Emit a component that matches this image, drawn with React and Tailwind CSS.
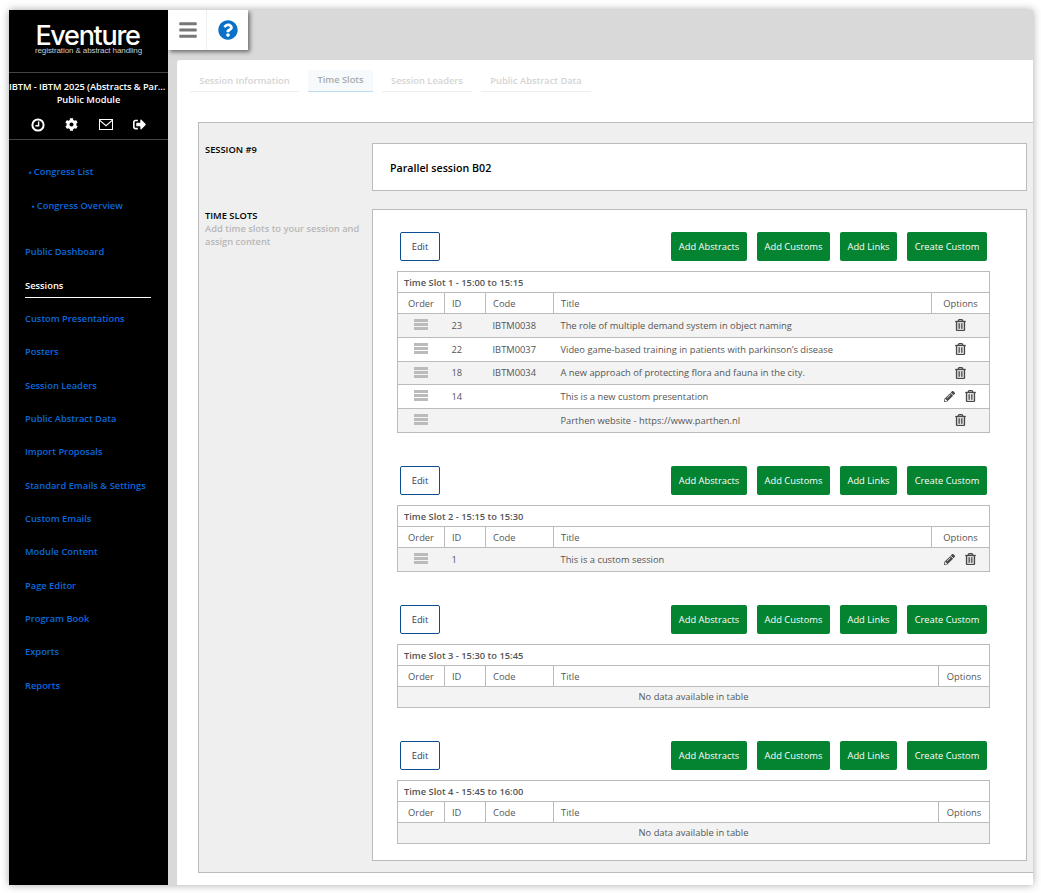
import React from "react";
import { FaBars, FaQuestionCircle, FaCog, FaSignOutAlt, FaRegTrashAlt, FaPencilAlt } from "react-icons/fa";

const nav = [
  ["Public Dashboard", "h-[34px]"],
  ["Sessions", "h-[33px]", true],
  ["Custom Presentations", "h-[33px]"],
  ["Posters", "h-[34px]"],
  ["Session Leaders", "h-[33px]"],
  ["Public Abstract Data", "h-[33px]"],
  ["Import Proposals", "h-[34px]"],
  ["Standard Emails & Settings", "h-[33px]"],
  ["Custom Emails", "h-[33px]"],
  ["Module Content", "h-[34px]"],
  ["Page Editor", "h-[33px]"],
  ["Program Book", "h-[33px]"],
  ["Exports", "h-[34px]"],
  ["Reports", "h-[33px]"],
];

const tabs = [
  ["Session Information", "w-[109px]"],
  ["Time Slots", "w-[65px]", true],
  ["Session Leaders", "w-[90px]"],
  ["Public Abstract Data", "w-[110px]"],
];

function Handle() {
  return (
    <div className="mx-auto mb-[2px] flex w-[14px] flex-col gap-[1px]">
      <div className="h-[3px] bg-[#bbbbbb]" />
      <div className="h-[3px] bg-[#bbbbbb]" />
      <div className="h-[3px] bg-[#bbbbbb]" />
    </div>
  );
}

function Options({ edit }) {
  return (
    <div className="mb-[1px] flex items-center justify-center gap-[10px] text-[#4a4a4a]">
      {edit && <FaPencilAlt className="h-[11px] w-[11px]" />}
      <FaRegTrashAlt className="h-[12px] w-[11px]" stroke="currentColor" strokeWidth={12} />
    </div>
  );
}

function Slot({ caption, rows, optionsWide, className }) {
  const td = "px-[7px] text-[9.33px] text-[#555555]";
  const th = "border-x border-[#bbbbbb] px-[7px] pt-[1px] text-[9.33px] font-normal text-[#555555]";
  return (
    <div className={className}>
      <div className="flex h-[29px] items-stretch justify-between pl-[27px] pr-[39px]">
        <button className="w-[40px] rounded-[2px] border border-[#0b4f91] bg-white text-[9.33px] text-[#333a5a]">Edit</button>
        <div className="flex gap-[10px]">
          {[["Add Abstracts", "w-[76px]"], ["Add Customs", "w-[73px]"], ["Add Links", "w-[57px]"], ["Create Custom", "w-[80px]"]].map(([t, w]) => (
            <button key={t} className={`${w} rounded-[2px] bg-[#048330] text-[9.33px] font-medium text-white`}>{t}</button>
          ))}
        </div>
      </div>
      <table className="ml-[24px] mt-[10px] w-[593px] table-fixed border-collapse border border-[#bbbbbb]">
        <colgroup>
          <col className="w-[47px]" />
          <col className="w-[41px]" />
          <col className="w-[68px]" />
          <col />
          <col className={optionsWide ? "w-[58px]" : "w-[51px]"} />
        </colgroup>
        <tbody>
          <tr className="h-[21px]">
            <td colSpan={5} className="border-b border-[#bbbbbb] px-[6px] pt-[1px] text-[9.33px] font-semibold text-[#555555]">{caption}</td>
          </tr>
          <tr className="h-[21px] border-b border-[#bbbbbb]">
            <th className={`${th} text-center`}>Order</th>
            <th className={`${th} text-left`}>ID</th>
            <th className={`${th} text-left`}>Code</th>
            <th className={`${th} text-left`}>Title</th>
            <th className={`${th} text-center`}>Options</th>
          </tr>
          {rows.length === 0 ? (
            <tr className="h-[21px] bg-[#f3f3f3]">
              <td colSpan={5} className="text-center text-[9.33px] text-[#555555]">No data available in table</td>
            </tr>
          ) : (
            rows.map((r, i) => (
              <tr key={i} className={`${i === 2 ? "h-[23px]" : "h-[24px]"} border-b border-[#bbbbbb] ${i % 2 === 0 ? "bg-[#f3f3f3]" : "bg-white"}`}>
                <td><Handle /></td>
                <td className={td}>{r[0]}</td>
                <td className={td}>{r[1]}</td>
                <td className={td}>{r[2]}</td>
                <td><Options edit={r[3]} /></td>
              </tr>
            ))
          )}
        </tbody>
      </table>
    </div>
  );
}

export default function App() {
  return (
    <div className="h-[893px] w-[1041px] overflow-hidden bg-white pl-[9px] pt-[10px] font-['Open_Sans',sans-serif]">
      <div className="flex h-[875px] w-[1024px] overflow-hidden bg-[#d9d9d9] shadow-[0_0_8px_rgba(0,0,0,0.35)]">
        <aside className="flex w-[159px] shrink-0 flex-col bg-black text-center text-white">
          <div className="flex h-[63px] flex-col items-center border-b border-[#444444] pt-[14px]">
            <div className="pr-[2px] font-['Inter',sans-serif] text-[27px] font-medium leading-[23px] tracking-[-1.3px]">Eventure</div>
            <div className="font-['Liberation_Sans',sans-serif] text-[8px] leading-[8px] tracking-[-0.1px] text-[#cccccc]">registration &amp; abstract handling</div>
          </div>
          <div className="truncate pt-[7px] text-[9.33px] font-semibold leading-[13px] tracking-[-0.1px]">IBTM - IBTM 2025 (Abstracts &amp; Parallel)</div>
          <div className="text-[9.33px] font-semibold leading-[13px]">Public Module</div>
          <div className="flex h-[34px] items-center justify-around border-b border-[#444444] px-[12px] pt-[4px]">
            <svg viewBox="0 0 14 14" className="h-[14px] w-[14px]" fill="none" stroke="currentColor">
              <circle cx="7" cy="7" r="5.6" strokeWidth="2" />
              <path d="M7.6 3.6V7.8H4.4" strokeWidth="1.4" />
            </svg>
            <FaCog className="h-[13px] w-[13px]" />
            <svg viewBox="0 0 14 11" className="h-[11px] w-[14px]" fill="none" stroke="currentColor" strokeWidth="1">
              <rect x="0.5" y="0.5" width="13" height="10" />
              <path d="M0.8 1.4L7 6.6L13.2 1.4" strokeWidth="1.2" />
            </svg>
            <FaSignOutAlt className="h-[13px] w-[13px]" />
          </div>
          <div className="pl-[20px] pt-[24px] text-left text-[9.33px] font-semibold leading-[16px] text-[#0a68dc]">
            <div className="flex h-[34px] items-start"><span className="mr-[2px] text-[8px]">▪</span>Congress List</div>
            <div className="flex h-[38px] items-start pl-[3px]"><span className="mr-[2px] text-[8px]">▪</span>Congress Overview</div>
          </div>
          <nav className="mr-[17px] mt-[-1px] pl-[16px] text-left text-[9.33px] font-semibold">
            {nav.map(([t, h, active]) =>
              active ? (
                <div key={t} className={h}>
                  <div className="flex h-[29px] items-center border-b border-white pt-[5px] text-white">{t}</div>
                </div>
              ) : (
                <div key={t} className={`flex ${h} items-center text-[#0a68dc]`}>{t}</div>
              )
            )}
          </nav>
        </aside>
        <main className="flex min-w-0 flex-1 flex-col">
          <div className="flex h-[40px] w-[80px] bg-white shadow-[2px_2px_4px_rgba(0,0,0,0.5)]">
            <div className="flex w-[39px] items-center justify-center border-r border-[#eeeeee] pl-[1px] text-[#777777]">
              <FaBars className="h-[20px] w-[18px]" />
            </div>
            <div className="flex flex-1 items-center justify-center text-[#0a70c8]">
              <FaQuestionCircle className="h-[20px] w-[20px]" />
            </div>
          </div>
          <section className="ml-[9px] mt-[10px] flex min-h-0 flex-1 flex-col rounded-tl-[3px] bg-white pl-[13px]">
            <div className="mt-[10px] flex gap-[9px]">
              {tabs.map(([t, w, active]) => (
                <div key={t} className={`${w} flex h-[22px] items-center justify-center rounded-t-[3px] border-b text-[9.33px] font-semibold ${active ? "border-[#bcdcf2] bg-[#f7fafc] pb-[1px] text-[#aaaaaa]" : "border-[#eeeeee] pt-[1px] text-[#d4d4d4]"}`}>{t}</div>
              ))}
            </div>
            <div className="ml-[8px] mt-[30px] flex h-[751px] border border-r-0 border-[#bbbbbb] bg-[#efefef] pt-[20px]">
              <div className="w-[173px] shrink-0 pl-[6px] text-[9.33px] font-semibold leading-[13px]">
                <div className="text-black">SESSION #9</div>
                <div className="mt-[53px] text-black">TIME SLOTS</div>
                <div className="w-[160px] text-[#b8b8b8]">Add time slots to your session and assign content</div>
              </div>
              <div className="w-[655px] shrink-0">
                <div className="flex h-[48px] items-center border border-[#bbbbbb] bg-white pl-[17px] pt-[1px] text-[10.67px] font-semibold text-black">Parallel session B02</div>
                <div className="mt-[18px] h-[652px] border border-[#bbbbbb] bg-white pt-[22px]">
                  <Slot
                    caption="Time Slot 1 - 15:00 to 15:15"
                    rows={[
                      ["23", "IBTM0038", "The role of multiple demand system in object naming"],
                      ["22", "IBTM0037", "Video game-based training in patients with parkinson’s disease"],
                      ["18", "IBTM0034", "A new approach of protecting flora and fauna in the city."],
                      ["14", "", "This is a new custom presentation", true],
                      ["", "", "Parthen website - https://www.parthen.nl"],
                    ]}
                    optionsWide
                  />
                  <Slot
                    className="mt-[33px]"
                    caption="Time Slot 2 - 15:15 to 15:30"
                    rows={[["1", "", "This is a custom session", true]]}
                    optionsWide
                  />
                  <Slot className="mt-[33px]" caption="Time Slot 3 - 15:30 to 15:45" rows={[]} />
                  <Slot className="mt-[33px]" caption="Time Slot 4 - 15:45 to 16:00" rows={[]} />
                </div>
              </div>
            </div>
          </section>
        </main>
      </div>
    </div>
  );
}
